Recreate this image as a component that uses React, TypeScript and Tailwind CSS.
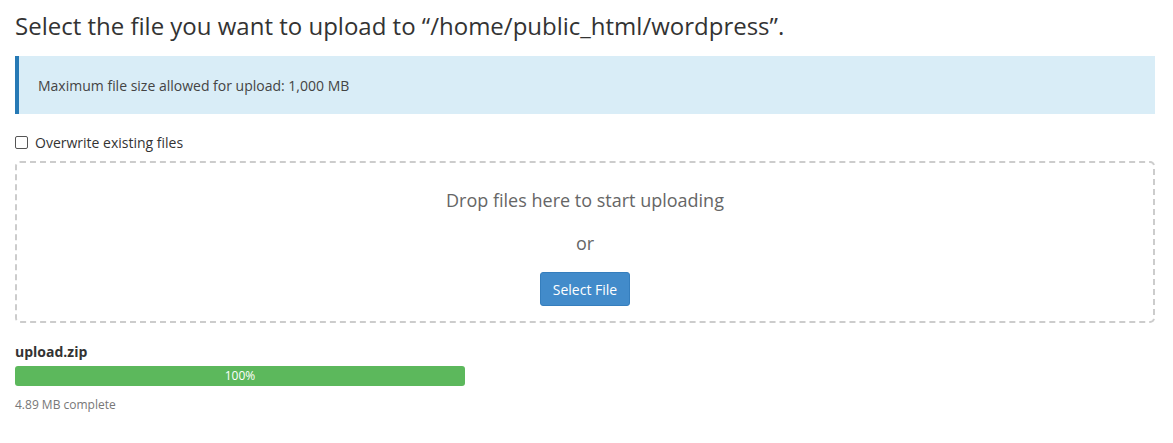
export default function App() {
  return (
    <div className="w-[1173px] h-[443px] bg-white px-[15px] pt-[9px] text-[#333]" style={{ fontFamily: '"Open Sans", "Noto Sans", sans-serif' }}>
      <h1 className="text-[24px] leading-[33px] text-[#333] font-normal">
        Select the file you want to upload to “/home/public_html/wordpress”.
      </h1>
      <div className="mt-[14px] w-[1140px] h-[58px] bg-[#d9edf7] border-l-4 border-[#2679b5] flex items-center pl-[19px] text-[14px] text-[#444]">
        Maximum file size allowed for upload: 1,000 MB
      </div>
      <label className="mt-[20px] flex items-center gap-[7px] text-[14px] text-[#333] h-[16px]">
        <span className="w-[13px] h-[13px] border border-[#555] rounded-[2px] bg-white inline-block" />
        Overwrite existing files
      </label>
      <div className="mt-[11px] w-[1140px] h-[162px] border-2 border-dashed border-[#ccc] rounded-[5px] flex flex-col items-center">
        <div className="mt-[25px] text-[18px] leading-[24px] text-[#666]">Drop files here to start uploading</div>
        <div className="mt-[19px] text-[18px] leading-[24px] text-[#666]">or</div>
        <button className="mt-[17px] w-[90px] h-[34px] bg-[#428bca] border border-[#357ebd] rounded-[3px] text-white text-[14px]">
          Select File
        </button>
      </div>
      <div className="mt-[19px] text-[14px] font-bold leading-[20px] text-[#333]">upload.zip</div>
      <div className="mt-[4px] w-[450px] h-[20px] bg-[#5cb85c] rounded-[3px] flex items-center justify-center text-white text-[12px]">
        100%
      </div>
      <div className="mt-[11px] text-[12px] leading-[16px] text-[#777]">4.89 MB complete</div>
    </div>
  );
}
